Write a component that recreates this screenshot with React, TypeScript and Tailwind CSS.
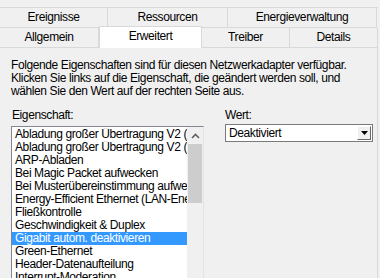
const topTabs = [
  { label: "Ereignisse", w: "w-[108px]" },
  { label: "Ressourcen", w: "w-[120px]" },
  { label: "Energieverwaltung", w: "w-[149px]" },
];

const items = [
  "Abladung großer Übertragung V2 (IPv4)",
  "Abladung großer Übertragung V2 (IPv6)",
  "ARP-Abladen",
  "Bei Magic Packet aufwecken",
  "Bei Musterübereinstimmung aufwecken",
  "Energy-Efficient Ethernet (LAN-Energiesparmodus)",
  "Fließkontrolle",
  "Geschwindigkeit & Duplex",
  "Gigabit autom. deaktivieren",
  "Green-Ethernet",
  "Header-Datenaufteilung",
  "Interrupt-Moderation",
];

function Tab({ label, w }: { label: string; w: string }) {
  return (
    <div
      className={`${w} h-[20px] flex items-center justify-center border-r border-b border-[#d9d9d9]`}
    >
      {label}
    </div>
  );
}

export default function App() {
  return (
    <div className="w-[380px] h-[278px] overflow-hidden bg-[#f0f0f0] text-[12px] leading-[13px] tracking-[-0.4px] text-black font-['Liberation_Sans',sans-serif]">
      {/* tab strip, two rows */}
      <div className="pt-[7px]">
        <div className="flex border-t border-[#d9d9d9] w-[378px]">
          {topTabs.map((t) => (
            <Tab key={t.label} label={t.label} w={t.w} />
          ))}
        </div>
        <div className="flex w-[378px]">
          <Tab label="Allgemein" w="w-[99px]" />
          <div className="relative z-10 -mt-[2px] w-[103px] h-[22px] bg-white border-x border-t border-[#d9d9d9] flex items-center justify-center pb-[3px]">
            Erweitert
          </div>
          <Tab label="Treiber" w="w-[88px]" />
          <Tab label="Details" w="w-[88px]" />
        </div>
      </div>

      {/* page */}
      <div className="w-[378px] h-[240px] border-r border-[#d9d9d9] pl-[11px] pt-[11px]">
        <p>
          Folgende Eigenschaften sind für diesen Netzwerkadapter verfügbar.
          <br />
          Klicken Sie links auf die Eigenschaft, die geändert werden soll, und
          <br />
          wählen Sie den Wert auf der rechten Seite aus.
        </p>

        <div className="flex mt-[11px]">
          <div className="w-[214px]">
            <div className="pl-[1px]">Eigenschaft:</div>
            <div className="mt-[4px] w-[193px] h-[160px] border border-[#828790] border-r-[#e3e3e3] bg-white flex">
              <div className="flex-1 min-w-0 pt-[1px]">
                {items.map((it) => (
                  <div
                    key={it}
                    className={`h-[13px] pl-[3px] whitespace-nowrap overflow-hidden ${
                      it.startsWith("Gigabit") ? "bg-[#3399ff] text-white" : ""
                    }`}
                  >
                    {it}
                  </div>
                ))}
              </div>
              <div className="w-[16px] bg-[#f0f0f0] flex flex-col">
                <div className="h-[17px] flex items-center justify-center">
                  <svg width="9" height="6" viewBox="0 0 9 6">
                    <path d="M1 5 L4.5 1.5 L8 5" fill="none" stroke="#606060" strokeWidth="1.6" />
                  </svg>
                </div>
                <div className="mx-[1px] h-[59px] bg-[#cdcdcd]" />
              </div>
            </div>
          </div>

          <div className="w-[148px]">
            <div>Wert:</div>
            <div className="mt-[2px] h-[18px] bg-white border border-[#7a7a7a] flex items-center">
              <span className="flex-1 pl-[3px]">Deaktiviert</span>
              <div className="w-[14px] h-[14px] mr-[1px] bg-[#f0f0f0] border border-[#fff] border-r-[#696969] border-b-[#696969] flex items-center justify-center">
                <svg width="7" height="4" viewBox="0 0 7 4">
                  <path d="M0 0 H7 L3.5 4 Z" fill="#000" />
                </svg>
              </div>
            </div>
          </div>
        </div>
      </div>
    </div>
  );
}
